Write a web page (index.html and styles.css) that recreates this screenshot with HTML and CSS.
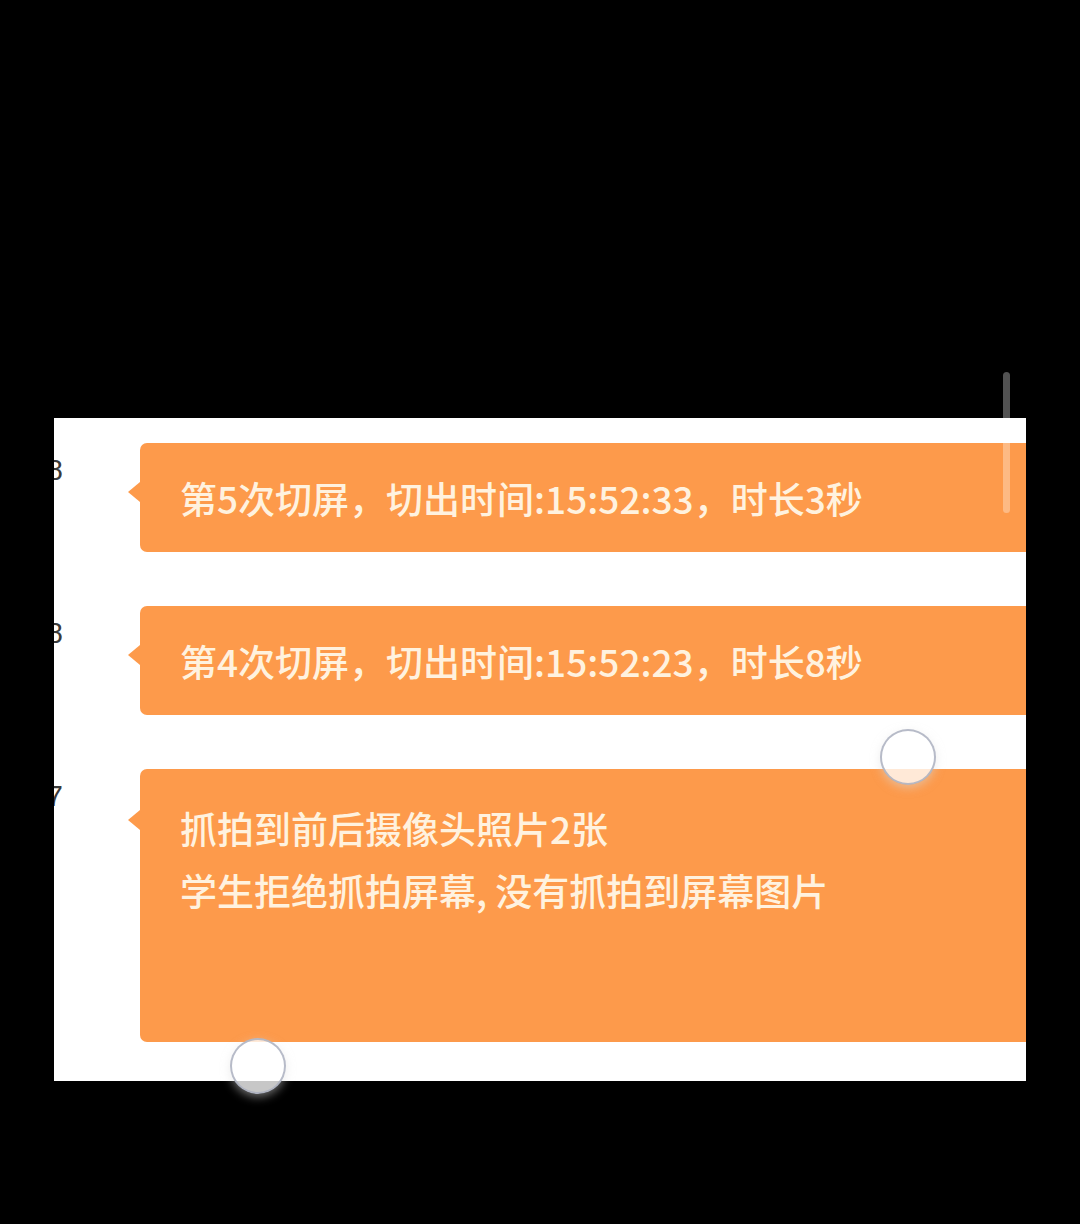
FILE: index.html
```html
<!DOCTYPE html>
<html lang="zh-CN">
<head>
<meta charset="utf-8">
<link rel="stylesheet" href="styles.css">
</head>
<body>
<div class="screen">
  <div class="panel">
    <div class="row">
      <div class="time"><span>15:52:38</span></div>
      <div class="bubble b-short">
        <div class="line">第5次切屏，切出时间:15:52:33，时长3秒</div>
      </div>
    </div>
    <div class="row">
      <div class="time"><span>15:52:28</span></div>
      <div class="bubble b-short">
        <div class="line">第4次切屏，切出时间:15:52:23，时长8秒</div>
      </div>
    </div>
    <div class="row">
      <div class="time"><span>15:52:17</span></div>
      <div class="bubble b-tall">
        <div class="line">抓拍到前后摄像头照片2张</div>
        <div class="line">学生拒绝抓拍屏幕, 没有抓拍到屏幕图片</div>
      </div>
    </div>
  </div>
  <div class="scrollbar"></div>
  <div class="touch t1"></div>
  <div class="touch t2"></div>
</div>
</body>
</html>
```

FILE: styles.css
```css
html, body {
  margin: 0;
  padding: 0;
  background: #000;
}
.screen {
  position: relative;
  width: 1080px;
  height: 1224px;
  background: #000;
  padding-top: 418px;
  box-sizing: border-box;
  font-family: "Noto Sans CJK SC", "Noto Sans", sans-serif;
}
.panel {
  margin-left: 54px;
  width: 972px;
  height: 663px;
  background: #fff;
  overflow: hidden;
  padding-top: 25px;
  box-sizing: border-box;
  display: flex;
  flex-direction: column;
  gap: 54px;
}
.row {
  display: flex;
  align-items: flex-start;
}
.time {
  width: 9px;
  flex: none;
  display: flex;
  justify-content: flex-end;
  white-space: nowrap;
  font-family: "Liberation Sans", sans-serif;
  font-size: 29px;
  color: #3a3a3a;
  line-height: 30px;
  margin-top: 12px;
}
.bubble {
  position: relative;
  margin-left: 77px;
  flex: none;
  width: 920px;
  background: #fd9a4b;
  border-radius: 7px;
  box-sizing: border-box;
  padding-left: 40px;
  color: #fff2df;
  font-size: 37px;
  font-weight: 500;
  letter-spacing: 0;
}
.bubble::before {
  content: "";
  position: absolute;
  left: -12px;
  top: 39px;
  border-style: solid;
  border-width: 10px 12px 10px 0;
  border-color: transparent #fd9a4b transparent transparent;
}
.b-short {
  height: 109px;
  padding-top: 24px;
}
.b-tall {
  height: 273px;
  padding-top: 28px;
}
.b-tall::before {
  top: 41px;
}
.line {
  line-height: 62px;
  white-space: nowrap;
}
.scrollbar {
  position: absolute;
  left: 1003px;
  top: 372px;
  width: 7px;
  height: 141px;
  border-radius: 4px;
  background: rgba(255, 255, 255, 0.32);
}
.touch {
  position: absolute;
  width: 52px;
  height: 52px;
  border-radius: 50%;
  border: 2px solid rgba(170, 175, 190, 0.85);
  background: rgba(255, 255, 255, 0.78);
  box-shadow: 0 3px 10px rgba(220, 220, 220, 0.5);
}
.t1 {
  left: 880px;
  top: 729px;
}
.t2 {
  left: 230px;
  top: 1038px;
}
```
